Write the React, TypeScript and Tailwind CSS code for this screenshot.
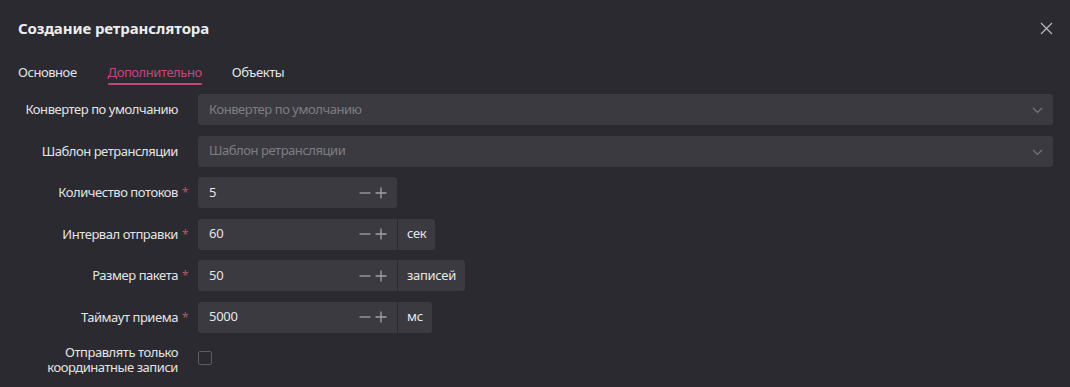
import React from "react";

const font = { fontFamily: '"Noto Sans", "Open Sans", sans-serif' };

function Label({ text, required }: { text: React.ReactNode; required?: boolean }) {
  return (
    <div className="w-[198px] shrink-0 flex justify-end items-center pr-[20px] text-[13px] tracking-[-0.45px] text-[#e4e4e6] text-right leading-[15px]">
      <span>{text}</span>
      {required ? <span className="ml-[4px] -mr-[10px] w-[6px] text-[#a85a66] text-[12px]">*</span> : null}
    </div>
  );
}

function Select({ placeholder }: { placeholder: string }) {
  return (
    <div className="flex-1 h-[31px] rounded-[3px] bg-[#3b3a40] flex items-center pl-[11px] pr-[10px] mr-[17px]">
      <span className="flex-1 text-[13px] tracking-[-0.45px] text-[#7e7d84]">{placeholder}</span>
      <svg width="11" height="7" viewBox="0 0 11 7" className="mt-[2px]">
        <path d="M1 1 L5.5 5.5 L10 1" fill="none" stroke="#77767c" strokeWidth="1.2" />
      </svg>
    </div>
  );
}

function Num({ value, unit }: { value: string; unit?: string }) {
  return (
    <div className="flex h-[31px] rounded-[3px] bg-[#3b3a40]">
      <div className="w-[199px] flex items-center pl-[11px] pr-[10px]">
        <span className="flex-1 text-[13px] tracking-[-0.3px] text-[#e6e6e8]">{value}</span>
        <svg width="12" height="12" viewBox="0 0 12 12" className="mr-[4px]">
          <path d="M0.5 6 H11.5" stroke="#a2a1a7" strokeWidth="1.3" />
        </svg>
        <svg width="12" height="12" viewBox="0 0 12 12">
          <path d="M0.5 6 H11.5 M6 0.5 V11.5" stroke="#a2a1a7" strokeWidth="1.3" />
        </svg>
      </div>
      {unit ? (
        <div className="flex items-center border-l border-[#2b2a30] px-[9px] text-[13px] tracking-[-0.3px] text-[#e6e6e8]">{unit}</div>
      ) : null}
    </div>
  );
}

export default function App() {
  return (
    <div className="w-[1070px] h-[387px] bg-[#2b2a30] overflow-hidden" style={font}>
      <div className="flex items-center justify-between pl-[18px] pr-[17px] pt-[16px] h-[40px]">
        <div className="text-[15px] font-bold tracking-[-0.1px] text-[#ededef]">Создание ретранслятора</div>
        <svg width="13" height="13" viewBox="0 0 13 13">
          <path d="M1 1 L12 12 M12 1 L1 12" stroke="#b9b8bd" strokeWidth="1.2" />
        </svg>
      </div>
      <div className="flex pl-[18px] mt-[23px] text-[13px] tracking-[-0.45px] h-[25px]">
        <div className="text-[#e4e4e6] mr-[31px]">Основное</div>
        <div className="relative text-[#c2477f] mr-[30px]">
          Дополнительно
          <div className="absolute left-0 right-0 top-[20px] h-[2px] bg-[#c2477f] rounded" />
        </div>
        <div className="text-[#e4e4e6]">Объекты</div>
      </div>
      <div className="flex flex-col gap-[10.5px] mt-[6px]">
        <div className="flex h-[31px]">
          <Label text="Конвертер по умолчанию" />
          <Select placeholder="Конвертер по умолчанию" />
        </div>
        <div className="flex h-[31px]">
          <Label text="Шаблон ретрансляции" />
          <Select placeholder="Шаблон ретрансляции" />
        </div>
        <div className="flex h-[31px]">
          <Label text="Количество потоков" required />
          <Num value="5" />
        </div>
        <div className="flex h-[31px]">
          <Label text="Интервал отправки" required />
          <Num value="60" unit="сек" />
        </div>
        <div className="flex h-[31px]">
          <Label text="Размер пакета" required />
          <Num value="50" unit="записей" />
        </div>
        <div className="flex h-[31px]">
          <Label text="Таймаут приема" required />
          <Num value="5000" unit="мс" />
        </div>
        <div className="flex items-center mt-[2px]">
          <Label text={<>Отправлять только<br />координатные записи</>} />
          <div className="w-[14px] h-[14px] -mt-[4px] border border-[#5d5c62] rounded-[2px]" />
        </div>
      </div>
    </div>
  );
}
